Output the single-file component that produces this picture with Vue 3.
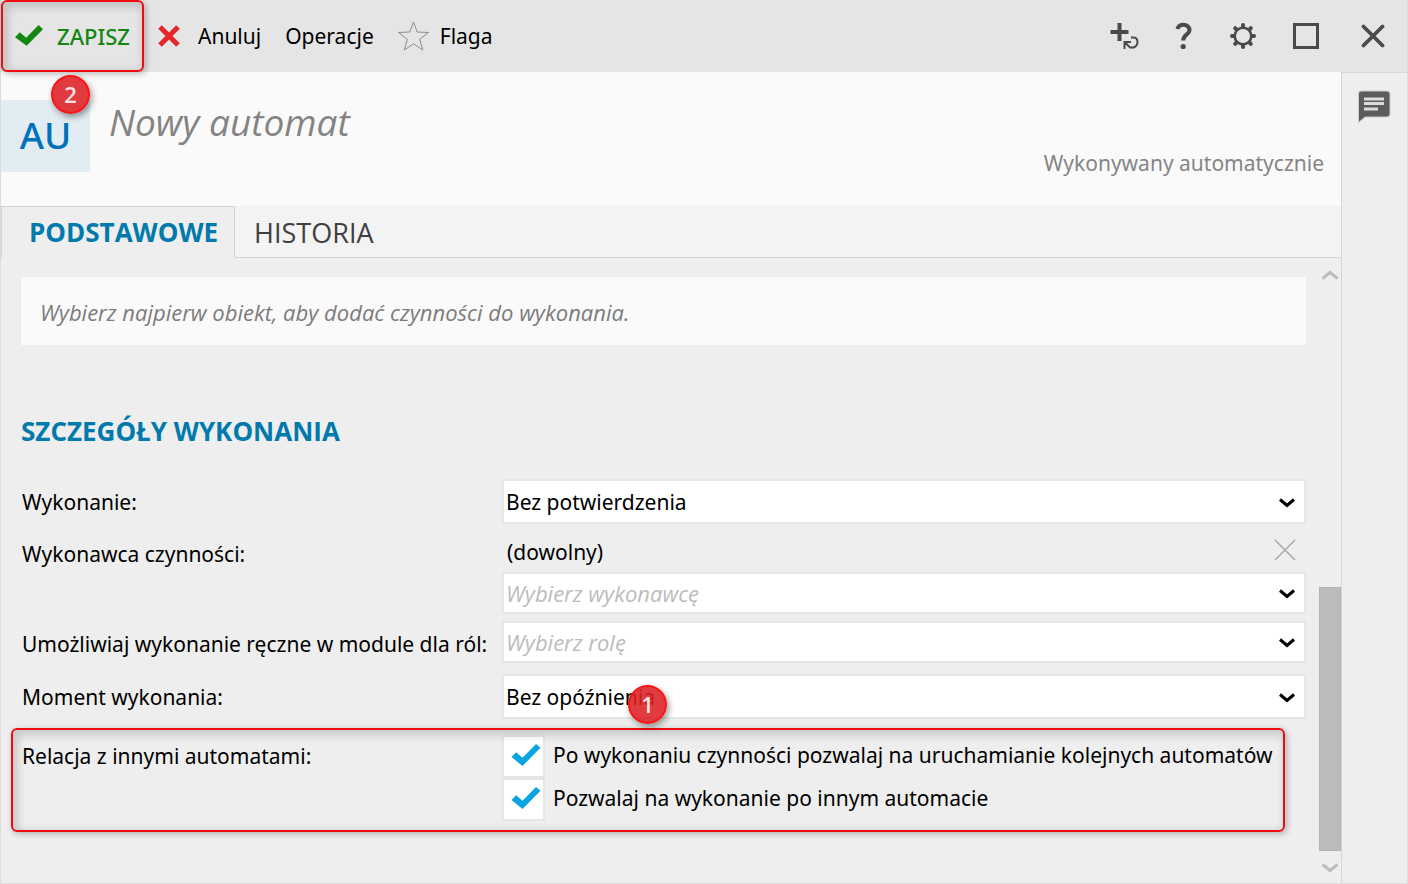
<script setup>
import { ref } from 'vue'

const execution = ref('Bez potwierdzenia')
const performer = ref('')
const role = ref('')
const moment = ref('Bez opóźnienia')
const allowNext = ref(true)
const allowAfter = ref(true)
const activeTab = ref('basic')
</script>

<template>
  <div class="window">
    <header class="toolbar">
      <button class="tool save" type="button">
        <svg width="28" height="22" viewBox="0 0 28 22"><path d="M0 12.200 4.800 7.200 11.200 12.800 23.600 0 28 4.200 11.600 20.800Z" fill="#128712" /></svg>
        <span>ZAPISZ</span>
        <span class="marker marker-save">2</span>
      </button>
      <button class="tool cancel" type="button">
        <svg width="22" height="22" viewBox="0 0 22 22"><path d="M2 2 20 20M20 2 2 20" stroke="#e5262b" stroke-width="5" fill="none" /></svg>
        <span>Anuluj</span>
      </button>
      <button class="tool" type="button">Operacje</button>
      <button class="tool flag" type="button">
        <svg width="32" height="30" viewBox="0 0 32 30"><path d="M15.500 1 19.200 11 30.500 11.500 21.700 18.300 24.700 29 15.500 22.800 6.300 29 9.300 18.300.500 11.500 11.800 11Z" fill="none" stroke="#8c8c8c" stroke-width="1" /></svg>
        <span>Flaga</span>
      </button>
      <div class="window-actions">
        <button type="button" aria-label="Dodaj kolejny">
          <svg width="30" height="28" viewBox="0 0 30 28"><path d="M10.500 1V19M1.500 10H19.500" stroke="#4a4a4a" stroke-width="4" fill="none" /><path d="M22 15.500H25Q28.500 16 28.500 20T24.500 25.500H21L16 20.500M15.500 27V20H22" stroke="#4a4a4a" stroke-width="2" fill="none" /></svg>
        </button>
        <button type="button" aria-label="Pomoc">
          <svg width="18" height="28" viewBox="0 0 18 28"><path d="M2.500 7Q3.500 2.800 8.500 2.800T14.600 8C14.600 12.500 8.200 12.500 8.200 18.500" stroke="#4a4a4a" stroke-width="4" fill="none" /><circle cx="8.200" cy="24.500" r="2.600" fill="#4a4a4a" /></svg>
        </button>
        <button type="button" aria-label="Ustawienia">
          <svg width="28" height="28" viewBox="0 0 28 28"><circle cx="14" cy="14" r="8.300" fill="none" stroke="#4a4a4a" stroke-width="2.600" /><path d="M14 3V4.500M14 23.500V25M3 14H4.500M23.500 14H25M6.200 6.200 7 7M21 21 21.800 21.800M21.800 6.200 21 7M7 21 6.200 21.800" stroke="#4a4a4a" stroke-width="4" stroke-linecap="round" /></svg>
        </button>
        <button type="button" aria-label="Maksymalizuj">
          <svg width="26" height="26" viewBox="0 0 26 26"><rect x="1.500" y="1.500" width="23" height="23" fill="none" stroke="#4a4a4a" stroke-width="3" /></svg>
        </button>
        <button class="close" type="button" aria-label="Zamknij">
          <svg width="24" height="24" viewBox="0 0 24 24"><path d="M2.500 2.500 21.500 21.500M21.500 2.500 2.500 21.500" stroke="#4a4a4a" stroke-width="3.800" stroke-linecap="round" /></svg>
        </button>
      </div>
    </header>

    <div class="body">
      <main class="main">
        <section class="heading">
          <div class="avatar">AU</div>
          <h1>Nowy automat</h1>
          <p>Wykonywany automatycznie</p>
        </section>

        <nav class="tabs">
          <button type="button" class="tab" :class="{ active: activeTab === 'basic' }" @click="activeTab = 'basic'">PODSTAWOWE</button>
          <button type="button" class="tab" :class="{ active: activeTab === 'history' }" @click="activeTab = 'history'">HISTORIA</button>
        </nav>

        <div class="scroll-area">
          <form class="content" @submit.prevent>
            <p class="notice">Wybierz najpierw obiekt, aby dodać czynności do wykonania.</p>
            <h2>SZCZEGÓŁY WYKONANIA</h2>

            <div class="row">
              <label for="execution">Wykonanie:</label>
              <div class="picker tall">
                <select id="execution" v-model="execution">
                  <option>Bez potwierdzenia</option>
                </select>
                <svg class="chevron" width="16" height="12" viewBox="0 0 16 12"><path d="M1 2.500 8 8.500 15 2.500" /></svg>
              </div>
            </div>

            <div class="row performer">
              <label for="performer">Wykonawca czynności:</label>
              <div class="stack">
                <div class="chosen">
                  <span>(dowolny)</span>
                  <button type="button" aria-label="Usuń wykonawcę">
                    <svg width="22" height="22" viewBox="0 0 22 22"><path d="M1 1 21 21M21 1 1 21" stroke="#a8a8a8" stroke-width="1.500" /></svg>
                  </button>
                </div>
                <div class="picker">
                  <select id="performer" v-model="performer" class="empty">
                    <option value="">Wybierz wykonawcę</option>
                  </select>
                  <svg class="chevron" width="16" height="12" viewBox="0 0 16 12"><path d="M1 2.500 8 8.500 15 2.500" /></svg>
                </div>
              </div>
            </div>

            <div class="row roles">
              <label for="role">Umożliwiaj wykonanie ręczne w module dla ról:</label>
              <div class="picker">
                <select id="role" v-model="role" class="empty">
                  <option value="">Wybierz rolę</option>
                </select>
                <svg class="chevron" width="16" height="12" viewBox="0 0 16 12"><path d="M1 2.500 8 8.500 15 2.500" /></svg>
              </div>
            </div>

            <div class="row moment">
              <label for="moment">Moment wykonania:</label>
              <div class="picker tall">
                <select id="moment" v-model="moment">
                  <option>Bez opóźnienia</option>
                </select>
                <svg class="chevron" width="16" height="12" viewBox="0 0 16 12"><path d="M1 2.500 8 8.500 15 2.500" /></svg>
              </div>
            </div>

            <div class="row relations" role="group" aria-labelledby="relations-label">
              <span id="relations-label" class="row-label">Relacja z innymi automatami:</span>
              <div class="stack">
                <label class="check">
                  <input v-model="allowNext" type="checkbox" />
                  <svg v-if="allowNext" class="tick" width="30" height="24" viewBox="0 0 30 24"><path d="M.5 14 5.200 9.300 11.500 14.800 25 1 29.500 4.800 11.500 23Z" fill="#0aa5e1" /></svg>
                  <span>Po wykonaniu czynności pozwalaj na uruchamianie kolejnych automatów</span>
                </label>
                <label class="check">
                  <input v-model="allowAfter" type="checkbox" />
                  <svg v-if="allowAfter" class="tick" width="30" height="24" viewBox="0 0 30 24"><path d="M.5 14 5.200 9.300 11.500 14.800 25 1 29.500 4.800 11.500 23Z" fill="#0aa5e1" /></svg>
                  <span>Pozwalaj na wykonanie po innym automacie</span>
                </label>
              </div>
              <span class="marker marker-relations">1</span>
            </div>
          </form>

          <div class="scrollbar">
            <button type="button" aria-label="Przewiń w górę">
              <svg width="16" height="12" viewBox="0 0 16 12"><path d="M.5 10.500 8 4.500 15.500 10.500" /></svg>
            </button>
            <div class="track"><div class="thumb"></div></div>
            <button type="button" aria-label="Przewiń w dół">
              <svg width="16" height="12" viewBox="0 0 16 12"><path d="M.5 3.500 8 9.500 15.500 3.500" /></svg>
            </button>
          </div>
        </div>
      </main>

      <aside class="rail">
        <button type="button" aria-label="Komentarze">
          <svg width="34" height="34" viewBox="0 0 34 34"><path d="M4 1H30Q33 1 33 4V24Q33 27 30 27H8L1.500 32.500V4Q1.500 1 4 1Z" fill="#5c5c5c" stroke="#c9c9c9" stroke-width="1" /><path d="M7 9H27M7 13.500H27M7 19H21" stroke="#dcdcdc" stroke-width="3" /></svg>
        </button>
      </aside>
    </div>
  </div>
</template>

<style>
body {
  background: #eee;
}
</style>

<style scoped>
.window {
  display: flex;
  flex-direction: column;
  min-height: 100vh;
  box-sizing: border-box;
  border: solid #dcdcdc;
  border-width: 0 1px 1px;
  background: #eee;
  color: #000;
  font: 21px/30px "Noto Sans", "Open Sans", sans-serif;
}
button {
  border: 0;
  padding: 0;
  background: none;
  font: inherit;
  color: inherit;
  cursor: pointer;
}
h1, h2, p {
  margin: 0;
}
svg {
  display: block;
  flex: none;
}
.toolbar {
  display: flex;
  align-items: center;
  height: 72px;
  background: #e5e5e5;
}
.tool {
  display: flex;
  align-items: center;
  margin-right: 24px;
  white-space: nowrap;
}
.save {
  position: relative;
  align-self: stretch;
  gap: 14px;
  margin-right: 14px;
  padding: 0 14px;
  color: #128712;
  font-weight: 500;
  font-size: 22px;
}
.save::after,
.relations::after {
  content: "";
  position: absolute;
  border: 2px solid #f00c0c;
  border-radius: 6px;
  box-shadow: 2px 2px 6px rgb(0 0 0 / 25%), inset 3px 3px 8px 2px rgb(0 0 0 / 16%);
  pointer-events: none;
}
.save::after {
  inset: 0;
}
.cancel {
  gap: 18px;
}
.flag {
  gap: 10px;
}
.window-actions {
  display: flex;
  align-items: center;
  gap: 36px;
  margin-left: auto;
  padding-right: 22px;
}
.close {
  margin-left: 6px;
}
.marker {
  position: absolute;
  z-index: 2;
  box-sizing: border-box;
  width: 39px;
  height: 39px;
  border: 2px solid #fa1414;
  border-radius: 50%;
  background: rgb(222 32 36 / 88%);
  box-shadow: 2px 3px 6px rgb(0 0 0 / 40%);
  color: #fbe3e3;
  font: 600 22px/34px "Open Sans", sans-serif;
  text-align: center;
}
.marker-save {
  left: 50px;
  top: 75px;
}
.body {
  display: flex;
  flex: 1;
}
.main {
  display: flex;
  flex: 1;
  flex-direction: column;
  min-width: 0;
}
.heading {
  display: grid;
  grid-template-columns: 89px 1fr auto;
  column-gap: 19px;
  height: 106px;
  box-sizing: content-box;
  padding: 28px 17px 0 0;
  background: #fafafa;
}
.avatar {
  height: 72px;
  background: #e1ecf3;
  color: #0071bc;
  font-size: 37px;
  font-weight: 500;
  line-height: 70px;
  text-align: center;
}
h1 {
  color: #848484;
  font: italic 400 37px/44px "Open Sans", "Noto Sans", sans-serif;
}
.heading p {
  margin-top: 48px;
  color: #858585;
}
.tabs {
  display: flex;
  height: 52px;
  background: linear-gradient(#d3d3d3, #d3d3d3) bottom / 100% 1px no-repeat #f3f3f3;
}
.tab {
  padding: 1px 18px 0;
  border: 1px solid transparent;
  border-bottom-color: #d3d3d3;
  color: #404040;
  font: 27px/49px "Open Sans", "Noto Sans", sans-serif;
}
.tab.active {
  padding: 1px 16px 0 27px;
  border-color: #d3d3d3;
  border-bottom-color: #eee;
  background: #eee;
  color: #0079ad;
  font-size: 26px;
  font-weight: 700;
}
.scroll-area {
  display: flex;
  flex: 1;
}
.content {
  flex: 1;
  min-width: 0;
  padding: 19px 13px 0 20px;
}
.notice {
  padding: 20px 19px 18px;
  background: #fafafa;
  color: #7c7c7c;
  font: italic 22px/30px "Open Sans", "Noto Sans", sans-serif;
}
h2 {
  margin: 70px 0 32px;
  color: #0079ad;
  font: 700 26px/32px "Open Sans", "Noto Sans", sans-serif;
}
.row {
  position: relative;
  display: grid;
  grid-template-columns: 481px minmax(0, 1fr);
}
.row > label,
.row-label {
  padding-left: 1px;
  white-space: nowrap;
}
.row > label {
  align-self: center;
}
.performer {
  margin-top: 15px;
}
.performer > label {
  align-self: start;
}
.roles {
  margin-top: 7px;
}
.roles > label {
  padding-top: 4px;
}
.moment {
  margin-top: 11px;
}
.picker {
  position: relative;
}
select {
  display: block;
  appearance: none;
  box-sizing: border-box;
  width: 100%;
  height: 42px;
  padding: 0 36px 0 2px;
  border: 2px solid #e6e6e6;
  border-radius: 0;
  background: #fff;
  color: #000;
  font: inherit;
}
.tall select {
  height: 45px;
}
select.empty {
  color: #bcbcbc;
  font: italic 22px/30px "Open Sans", "Noto Sans", sans-serif;
}
.chevron {
  position: absolute;
  top: calc(50% - 5px);
  right: 11px;
  pointer-events: none;
}
.chevron path {
  fill: none;
  stroke: #000;
  stroke-width: 3;
}
.chosen {
  display: flex;
  align-items: flex-start;
  justify-content: space-between;
  height: 33px;
  padding: 0 10px 0 5px;
  line-height: 26px;
}
.relations {
  margin-top: 16px;
}
.relations::after {
  inset: -7px 21px -11px -10px;
}
.row-label {
  margin-top: 6px;
}
.marker-relations {
  left: 607px;
  top: -50px;
}
.check {
  position: relative;
  display: flex;
  align-items: center;
  gap: 9px;
  height: 43px;
  white-space: nowrap;
}
.check span {
  padding-bottom: 3px;
}
.check input {
  appearance: none;
  box-sizing: border-box;
  width: 43px;
  height: 43px;
  margin: 0 -1px 0 0;
  border: 2px solid #e6e6e6;
  background: #fff;
}
.tick {
  position: absolute;
  left: 9px;
  top: 8px;
  pointer-events: none;
}
.scrollbar {
  display: flex;
  flex-direction: column;
  width: 22px;
}
.scrollbar button {
  display: flex;
  align-items: center;
  justify-content: center;
  height: 32px;
}
.scrollbar path {
  fill: none;
  stroke: #bcbcbc;
  stroke-width: 3;
}
.track {
  display: flex;
  flex: 1;
  flex-direction: column;
  justify-content: flex-end;
}
.thumb {
  box-sizing: border-box;
  height: 47%;
  border: 1px solid #b3b3b3;
  background: #bbb;
}
.rail {
  display: flex;
  flex: none;
  align-items: flex-start;
  justify-content: center;
  box-sizing: border-box;
  width: 66px;
  padding: 17px 2px 0 0;
  border: solid #d6d6d6;
  border-width: 1px 0 0 1px;
}
</style>
